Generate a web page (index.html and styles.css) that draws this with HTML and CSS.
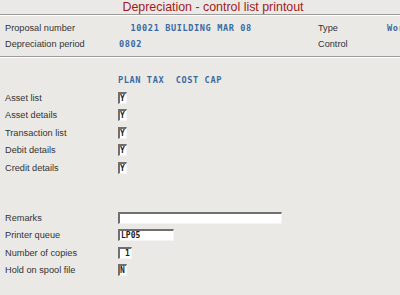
FILE: index.html
```html
<!DOCTYPE html>
<html>
<head>
    <title>Depreciation - control list printout</title>
    <link rel="stylesheet" href="styles.css">
</head>
<body>
    <div id="screen">
        <div id="title">Depreciation - control list printout</div>

        <div id="info">
            <div class="label">Proposal number</div>
            <div class="value">  10021 BUILDING MAR 08</div>
            <div class="label">Type</div>
            <div class="value">Work</div>

            <div class="label">Depreciation period</div>
            <div class="value">0802</div>
            <div class="label">Control</div>
            <div class="value"></div>
        </div>

        <div id="lists">
            <div class="row">
                <div class="label"></div>
                <div class="value">PLAN TAX  COST CAP</div>
            </div>
            <div class="row">
                <div class="label">Asset list</div>
                <div class="field check">Y</div>
            </div>
            <div class="row">
                <div class="label">Asset details</div>
                <div class="field check">Y</div>
            </div>
            <div class="row">
                <div class="label">Transaction list</div>
                <div class="field check">Y</div>
            </div>
            <div class="row">
                <div class="label">Debit details</div>
                <div class="field check">Y</div>
            </div>
            <div class="row">
                <div class="label">Credit details</div>
                <div class="field check">Y</div>
            </div>
        </div>

        <div id="print">
            <div class="row">
                <div class="label">Remarks</div>
                <div class="field remarks"></div>
            </div>
            <div class="row">
                <div class="label">Printer queue</div>
                <div class="field queue">LP05</div>
            </div>
            <div class="row">
                <div class="label">Number of copies</div>
                <div class="field copies">1</div>
            </div>
            <div class="row">
                <div class="label">Hold on spool file</div>
                <div class="field check">N</div>
            </div>
        </div>
    </div>
</body>
</html>
```
FILE: styles.css
```css
body{
    margin:0;
    background-color:#ebe9e6;
    font-family:"Liberation Sans", Arial, sans-serif;
    font-size:9.2px;
    color:#333333;
}

#screen{
    width:400px;
    height:295px;
    overflow:hidden;
}

#title{
    height:14px;
    line-height:14px;
    padding-left:26px;
    text-align:center;
    font-size:12.4px;
    color:#a01c1c;
    border-bottom:1px solid #9c9c9c;
    box-shadow:0 1px 0 #ffffff;
    white-space:nowrap;
}

#info{
    display:grid;
    grid-template-columns:114px 199px 69px 40px;
    grid-auto-rows:16px;
    align-items:center;
    padding:5px 0 4px 5px;
    border-bottom:1px solid #9c9c9c;
    box-shadow:0 1px 0 #ffffff;
    white-space:nowrap;
}

.value{
    font-family:"DejaVu Sans Mono", "Liberation Mono", monospace;
    font-weight:bold;
    font-size:8.6px;
    letter-spacing:0.6px;
    color:#3a6aa3;
    white-space:pre;
}

#lists{
    padding:14.5px 0 0 5px;
}

#lists .row{
    height:17.5px;
}

.row{
    display:flex;
    align-items:center;
}

.row .label{
    width:113px;
    flex-shrink:0;
}

#print{
    padding:33px 0 0 5px;
}

#print .row{
    height:17.3px;
}

.field{
    box-sizing:border-box;
    height:12px;
    background-color:#ffffff;
    border-top:2px solid #6f6f6f;
    border-left:2px solid #6f6f6f;
    border-right:1px solid #f4f4f4;
    border-bottom:1px solid #f4f4f4;
    font-family:"DejaVu Sans Mono", "Liberation Mono", monospace;
    font-weight:bold;
    font-size:8px;
    line-height:9px;
    color:#222222;
    padding-left:1px;
}

.check{
    width:9px;
    padding-left:0;
}

.remarks{
    width:164px;
}

.queue{
    width:56px;
}

.copies{
    width:14px;
    padding-left:5px;
}
```
